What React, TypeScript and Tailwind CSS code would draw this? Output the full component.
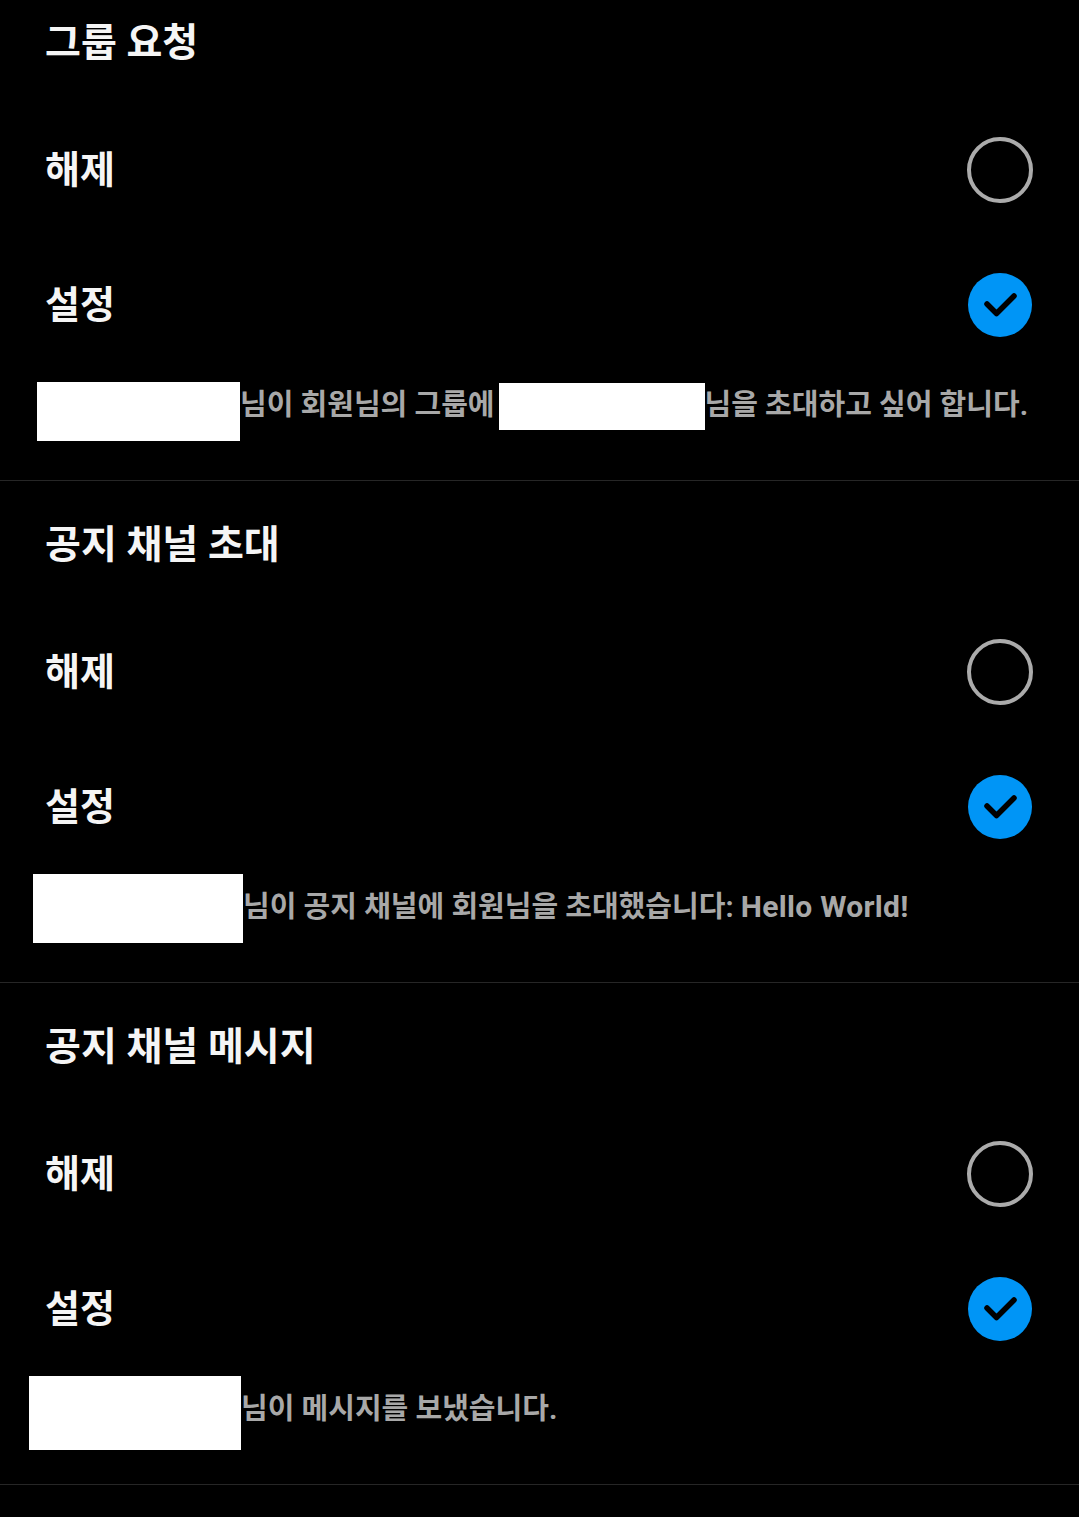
import React from 'react';

type Block = { box: string };

type Section = {
  title: string;
  // description pieces: strings are text, objects are redacted name boxes
  parts: (string | Block)[];
};

const sections: Section[] = [
  {
    title: '그룹 요청',
    parts: [
      { box: 'ml-[37px] mt-[10px] w-[203px] h-[59px]' },
      '님이 회원님의 그룹에',
      { box: 'ml-[4px] mt-[11px] w-[206px] h-[47px]' },
      '님을 초대하고 싶어 합니다.',
    ],
  },
  {
    title: '공지 채널 초대',
    parts: [
      { box: 'ml-[33px] mt-0 w-[210px] h-[69px]' },
      '님이 공지 채널에 회원님을 초대했습니다: ',
      'Hello World!',
    ],
  },
  {
    title: '공지 채널 메시지',
    parts: [
      { box: 'ml-[29px] mt-0 w-[212px] h-[74px]' },
      '님이 메시지를 보냈습니다.',
    ],
  },
];

function EmptyRadio() {
  return <div className="w-[66px] h-[66px] rounded-full border-[4px] border-[#ababab]" />;
}

function CheckedRadio() {
  return (
    <div className="w-[64px] h-[64px] rounded-full bg-[#0095f6] mr-[1px]">
      <svg viewBox="0 0 64 64" className="w-full h-full">
        <path d="M19 31 L28.5 40.5 L46 23" fill="none" stroke="#000" strokeWidth="5.5" strokeLinecap="round" strokeLinejoin="round" />
      </svg>
    </div>
  );
}

function OptionRow({ label, checked }: { label: string; checked: boolean }) {
  return (
    <div className="h-[135px] flex items-center justify-between pl-[45px] pr-[46px]">
      <span className="text-[38px] font-bold text-[#f5f5f5] leading-none">{label}</span>
      {checked ? <CheckedRadio /> : <EmptyRadio />}
    </div>
  );
}

function SettingSection({ section }: { section: Section }) {
  return (
    <section className="border-b border-[#262626]">
      <div className="h-[123px] flex items-center pt-[5px] pl-[45px]">
        <h2 className="text-[39px] font-bold text-[#f5f5f5] leading-none">{section.title}</h2>
      </div>
      <OptionRow label="해제" checked={false} />
      <OptionRow label="설정" checked />
      <div className="h-[108px] flex items-start">
        {section.parts.map((p, i) =>
          typeof p === 'string' ? (
            <span
              key={i}
              className={`mt-[15px] text-[29px] leading-[36px] font-bold text-[#a8a8a8] whitespace-pre ${
                /^[A-Za-z]/.test(p) ? 'text-[30px] tracking-[0.3px]' : ''
              }`}
            >
              {p}
            </span>
          ) : (
            <div key={i} className={`shrink-0 bg-white ${p.box}`} />
          )
        )}
      </div>
    </section>
  );
}

export default function App() {
  return (
    <div
      className="w-[1079px] h-[1517px] overflow-hidden bg-black"
      style={{ fontFamily: 'Roboto, "Noto Sans CJK KR", sans-serif' }}
    >
      <div className="-mt-[21px]">
        {sections.map((s) => (
          <SettingSection key={s.title} section={s} />
        ))}
        <section className="h-[200px]" />
      </div>
    </div>
  );
}
